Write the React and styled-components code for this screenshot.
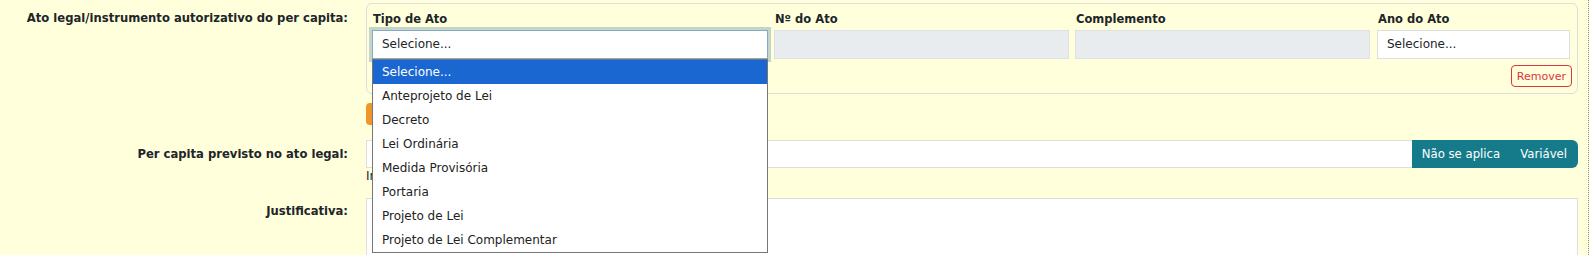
import React from "react";
import styled, {createGlobalStyle} from "styled-components";

const GlobalStyle = createGlobalStyle`
    body {
        margin: 0;
        background: #ffffdc;
        font-family: "DejaVu Sans", Verdana, sans-serif;
        font-size: 12px;
        color: #212529;
    }
`;

const Page = styled.div`
    width: 1589px;
    height: 255px;
    overflow: hidden;
    border-right: 1px dotted #8a8a8a;
    padding-top: 3px;
    box-sizing: border-box;
`;

const FormRow = styled.div`
    display: grid;
    grid-template-columns: 348px 1212px;
    column-gap: 18px;
    margin-bottom: ${({gap}) => gap || '0'};
`;

const RowLabel = styled.label`
    text-align: right;
    font-weight: bold;
    font-size: 11.6px;
    padding-top: ${({top}) => top || '0'};
    line-height: 16px;
`;

const Card = styled.div`
    border: 1px solid #dedede;
    border-radius: 6px;
    padding: 7px 5px 6px 5px;
`;

const Columns = styled.div`
    display: grid;
    grid-template-columns: 396px 295px 295px 194px;
    column-gap: 6px;

    & > :last-child {
        margin-left: 1px;
    }
`;

const Field = styled.div`
    position: relative;
    display: flex;
    flex-direction: column;
`;

const FieldLabel = styled.div`
    font-weight: bold;
    font-size: 11.5px;
    line-height: 16px;
    padding-left: 1px;
    margin-bottom: 3px;
`;

const SelectBox = styled.div`
    height: 29px;
    box-sizing: border-box;
    background: white;
    border: 1px solid ${({focused}) => focused ? '#86a9c6' : '#dcdfe3'};
    box-shadow: ${({focused}) => focused ? '0 0 0 3px #c4d4c8' : 'none'};
    padding: 0 9px;
    line-height: 27px;
    font-size: 12px;
`;

const DisabledInput = styled.div`
    height: 29px;
    box-sizing: border-box;
    background: #e9ecef;
    border: 1px solid #dde1e5;
`;

const Actions = styled.div`
    display: flex;
    justify-content: flex-end;
    margin-top: 6px;
`;

const RemoveButton = styled.button`
    font-family: inherit;
    font-size: 11px;
    color: #dc3545;
    background: none;
    border: 1px solid #dc3545;
    border-radius: 4px;
    height: 22px;
    padding: 0 5px;
`;

const AddButton = styled.button`
    display: block;
    margin-top: 9px;
    height: 22px;
    padding: 0 10px;
    background: #f0952a;
    color: white;
    border: none;
    border-radius: 4px;
    font-family: inherit;
    font-size: 11px;
`;

const InputGroup = styled.div`
    display: flex;
    height: 28px;
`;

const TextInput = styled.div`
    flex: 1;
    background: white;
    border: 1px solid #dedede;
    border-right: none;
`;

const Toggle = styled.div`
    display: flex;
    align-items: center;
    gap: 20px;
    background: #157b8a;
    color: white;
    border-radius: 0 6px 6px 0;
    padding: 0 11px 0 10px;
    font-size: 11.7px;
`;

const HelpText = styled.div`
    font-size: 12px;
    line-height: 16px;
`;

const TextArea = styled.div`
    height: 80px;
    background: white;
    border: 1px solid #dedede;
`;

const Dropdown = styled.ul`
    position: absolute;
    top: 48px;
    left: 0;
    width: 100%;
    box-sizing: border-box;
    margin: 0;
    padding: 0;
    list-style: none;
    background: white;
    border: 1px solid #767676;
    z-index: 10;
`;

const Option = styled.li`
    height: 24px;
    line-height: 24px;
    padding-left: 9px;
    font-size: 12px;
    background: ${({selected}) => selected ? '#1a67d2' : 'white'};
    color: ${({selected}) => selected ? 'white' : '#222'};
`;

const OPTIONS = [
    "Selecione...",
    "Anteprojeto de Lei",
    "Decreto",
    "Lei Ordinária",
    "Medida Provisória",
    "Portaria",
    "Projeto de Lei",
    "Projeto de Lei Complementar",
];

export default function App() {
    return (<>
        <GlobalStyle/>
        <Page>
            <FormRow gap="15px">
                <RowLabel top="7px">Ato legal/instrumento autorizativo do per capita:</RowLabel>
                <div>
                    <Card>
                        <Columns>
                            <Field>
                                <FieldLabel>Tipo de Ato</FieldLabel>
                                <SelectBox focused>Selecione...</SelectBox>
                                <Dropdown>
                                    {OPTIONS.map((o, i) => (
                                        <Option key={o} selected={i === 0}>{o}</Option>
                                    ))}
                                </Dropdown>
                            </Field>
                            <Field>
                                <FieldLabel>Nº do Ato</FieldLabel>
                                <DisabledInput/>
                            </Field>
                            <Field>
                                <FieldLabel>Complemento</FieldLabel>
                                <DisabledInput/>
                            </Field>
                            <Field>
                                <FieldLabel>Ano do Ato</FieldLabel>
                                <SelectBox>Selecione...</SelectBox>
                            </Field>
                        </Columns>
                        <Actions>
                            <RemoveButton>Remover</RemoveButton>
                        </Actions>
                    </Card>
                    <AddButton>Adicionar</AddButton>
                </div>
            </FormRow>
            <FormRow gap="14px">
                <RowLabel top="6px">Per capita previsto no ato legal:</RowLabel>
                <div>
                    <InputGroup>
                        <TextInput/>
                        <Toggle>
                            <span>Não se aplica</span>
                            <span>Variável</span>
                        </Toggle>
                    </InputGroup>
                    <HelpText>Informe o valor per capita.</HelpText>
                </div>
            </FormRow>
            <FormRow>
                <RowLabel top="5px">Justificativa:</RowLabel>
                <TextArea/>
            </FormRow>
        </Page>
    </>);
}
